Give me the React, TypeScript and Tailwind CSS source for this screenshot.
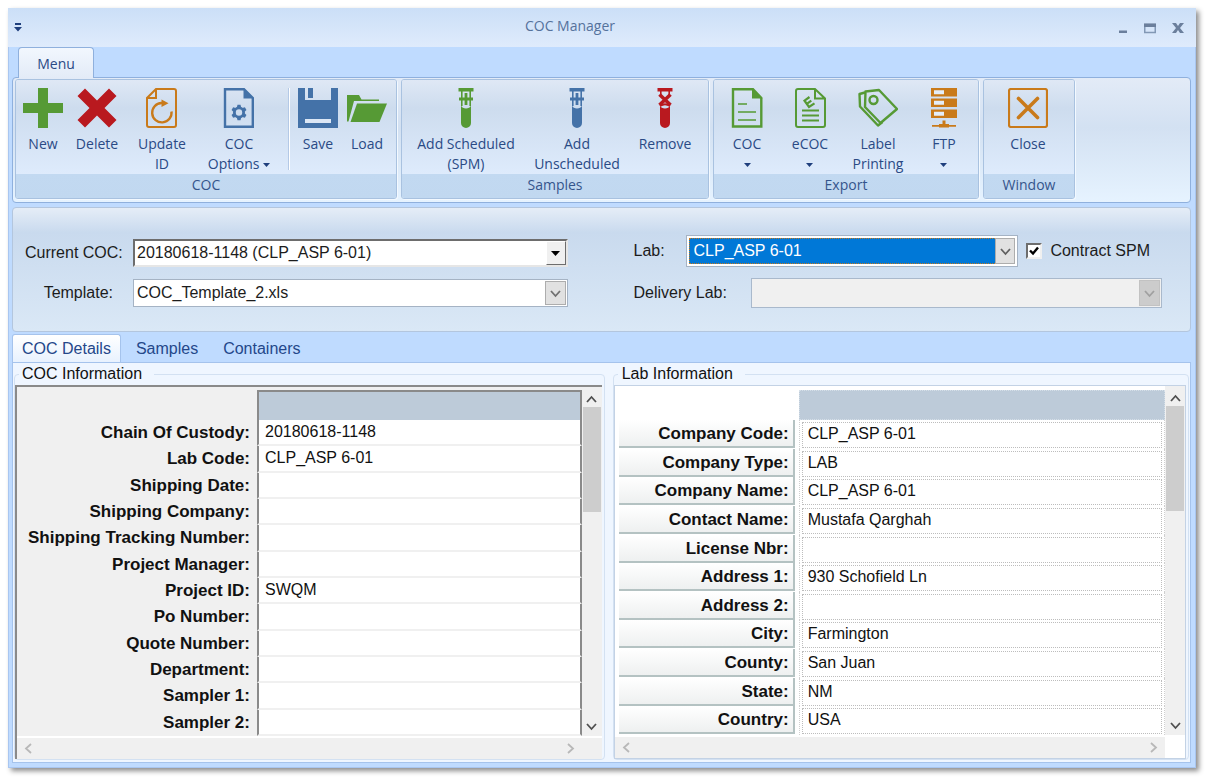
import { useState } from "react";
import type { ReactNode } from "react";

const GREEN = "#569a35";
const RED = "#b9191f";
const ORANGE = "#c97a1a";
const BLUE = "#4472a8";

const cocRows: [string, string][] = [
  ["Chain Of Custody:", "20180618-1148"],
  ["Lab Code:", "CLP_ASP 6-01"],
  ["Shipping Date:", ""],
  ["Shipping Company:", ""],
  ["Shipping Tracking Number:", ""],
  ["Project Manager:", ""],
  ["Project ID:", "SWQM"],
  ["Po Number:", ""],
  ["Quote Number:", ""],
  ["Department:", ""],
  ["Sampler 1:", ""],
  ["Sampler 2:", ""],
];

const labRows: [string, string][] = [
  ["Company Code:", "CLP_ASP 6-01"],
  ["Company Type:", "LAB"],
  ["Company Name:", "CLP_ASP 6-01"],
  ["Contact Name:", "Mustafa Qarghah"],
  ["License Nbr:", ""],
  ["Address 1:", "930 Schofield Ln"],
  ["Address 2:", ""],
  ["City:", "Farmington"],
  ["County:", "San Juan"],
  ["State:", "NM"],
  ["Country:", "USA"],
];

function Icon({ children }: { children: ReactNode }) {
  return (
    <svg className="w-10 h-10 shrink-0" viewBox="0 0 40 40" fill="none" aria-hidden="true">
      {children}
    </svg>
  );
}

function Caret() {
  return (
    <svg className="w-[7px] h-1 inline-block align-middle" viewBox="0 0 7 4" aria-hidden="true">
      <path d="M0 0h7L3.5 4z" fill="#1f3f7d" />
    </svg>
  );
}

function Chevron({ dir, color }: { dir: "up" | "down" | "left" | "right"; color: string }) {
  const paths = { up: "M1 8l4.5-5L10 8", down: "M1 3l4.5 5L10 3", left: "M8 1L3 5.5 8 10", right: "M3 1l5 4.5L3 10" };
  return (
    <svg width="11" height="11" viewBox="0 0 11 11" fill="none" aria-hidden="true">
      <path d={paths[dir]} stroke={color} strokeWidth={1.8} />
    </svg>
  );
}

function Tube({ color, remove }: { color: string; remove?: boolean }) {
  return (
    <Icon>
      <path d="M12.5 0h15v3.5h-15z" fill={color} />
      <path d="M15 17.5c1 2.2 2.6 3 5 3s4-.8 5-3V35a5 5 0 0 1-10 0z" fill={color} />
      {remove ? (
        <>
          <path d="M15.8 3v5M24.2 3v5" stroke={color} strokeWidth={1.6} />
          <path d="M14.5 6.5l11 10.5M25.5 6.5l-11 10.5" stroke={color} strokeWidth={3.6} />
          <path d="M15 18q5-3.5 10 0" stroke={color} strokeWidth={2} />
        </>
      ) : (
        <>
          <path d="M15.8 3v15M24.2 3v15" stroke={color} strokeWidth={1.6} />
          <path d="M13 11h14M20 5v12" stroke={color} strokeWidth={2.8} />
        </>
      )}
    </Icon>
  );
}

function RibbonGroup({ title, children }: { title: string; children: ReactNode }) {
  return (
    <section className="flex flex-col rounded-[3px] border border-[#a9c2e0] overflow-hidden shadow-[1px_1px_0_#f3f9ff]">
      <div className="flex items-stretch pt-2 pl-[2px] pr-1 flex-1 bg-linear-to-b from-[#dfe8f5] via-[#cddcee] via-30% to-[#deebfc]">{children}</div>
      <h2 className="h-6 text-center leading-[22px] bg-linear-to-b from-[#c2d9f1] to-[#c1d8f0] text-[#35558c]">{title}</h2>
    </section>
  );
}

function RibbonButton({ width, icon, lines, caret }: { width: string; icon: ReactNode; lines: string[]; caret?: boolean }) {
  return (
    <button type="button" className={`${width} flex flex-col items-center gap-[6px] min-h-[86px] leading-5 whitespace-nowrap hover:bg-white/30`}>
      {icon}
      <span className="block text-center">
        <span className="block">{lines[0]}</span>
        <span className="block h-5">
          {lines[1]} {caret && <Caret />}
        </span>
      </span>
    </button>
  );
}

function Ribbon() {
  return (
    <div className="flex gap-1 rounded-[4px] border border-[#8fb0dd] bg-linear-to-b from-[#e3ebf7] via-[#d3e1f2] via-40% to-[#e6f3ff] px-[2px] pt-px pb-[3px]">
      <RibbonGroup title="COC">
        <RibbonButton width="w-[50px]" lines={["New"]} icon={
          <Icon><path d="M15 0h10v15h15v10H25v15H15V25H0V15h15z" fill={GREEN} /></Icon>
        } />
        <RibbonButton width="w-[58px]" lines={["Delete"]} icon={
          <Icon><path d="M8 .5L20 12.5 32 .5 39.5 8l-12 12 12 12-7.5 7.5-12-12-12 12L.5 32l12-12L.5 8z" fill={RED} /></Icon>
        } />
        <RibbonButton width="w-[72px]" lines={["Update", "ID"]} icon={
          <Icon>
            <path d="M14 1h18q2 0 2 2v34q0 2-2 2H7q-2 0-2-2V10zV10H5" stroke={ORANGE} strokeWidth={2} />
            <path d="M29.5 23.5A9.7 9.7 0 1 1 19.5 15h3" stroke={ORANGE} strokeWidth={2.4} />
            <path d="M19.5 11.5l7 3.7-7 3.7z" fill={ORANGE} />
          </Icon>
        } />
        <RibbonButton width="w-[82px]" lines={["COC", "Options"]} caret icon={
          <Icon>
            <path d="M6 1.2h19l8.8 8.8v28.8H6z" stroke={BLUE} strokeWidth={2.4} />
            <path d="M24.5 0v10.5H35z" fill={BLUE} />
            <circle cx="20" cy="24.5" r="4.6" stroke={BLUE} strokeWidth={2.8} />
            {[0, 60, 120, 180, 240, 300].map((angle) => (
              <path key={angle} d="M17.8 19.5l.7-2.7h3l.7 2.7z" fill={BLUE} transform={`rotate(${angle} 20 24.5)`} />
            ))}
          </Icon>
        } />
        <div className="w-[2px] ml-2 mr-1 mb-1 border-l border-[#b4c9e6] bg-white" />
        <RibbonButton width="w-12" lines={["Save"]} icon={
          <Icon>
            <path d="M0 0h7v12h26V0h7v40H0zM10 0h5v10h-5z" fill={BLUE} />
            <path d="M7 31h26v4H7z" fill="#dce7f5" />
          </Icon>
        } />
        <RibbonButton width="w-[50px]" lines={["Load"]} icon={
          <Icon>
            <path d="M0 7h12l2.5 4.5H32V13H7L1.5 33.5H0z" fill={GREEN} />
            <path d="M10 15.5h30L32.5 34h-29z" fill={GREEN} />
          </Icon>
        } />
      </RibbonGroup>

      <RibbonGroup title="Samples">
        <RibbonButton width="w-[124px]" lines={["Add Scheduled", "(SPM)"]} icon={<Tube color={GREEN} />} />
        <RibbonButton width="w-[98px]" lines={["Add", "Unscheduled"]} icon={<Tube color={BLUE} />} />
        <RibbonButton width="w-[78px]" lines={["Remove"]} icon={<Tube color={RED} remove />} />
      </RibbonGroup>

      <RibbonGroup title="Export">
        <RibbonButton width="w-[62px]" lines={["COC"]} caret icon={
          <Icon>
            <path d="M6 1.2h20l8.3 8.8v28.5H6z" stroke={GREEN} strokeWidth={2.4} />
            <path d="M25 0v10.5h10.5z" fill={GREEN} />
            <path d="M11 16h9M11 24h18M11 32h18" stroke={GREEN} strokeWidth={1.5} />
          </Icon>
        } />
        <RibbonButton width="w-16" lines={["eCOC"]} caret icon={
          <Icon>
            <path d="M25 1H8Q6 1 6 3v34q0 2 2 2h25q2 0 2-2V10.5L25 1v9.5h10" stroke={GREEN} strokeWidth={2} />
            <path d="M12 22.5h17M12 27.5h17M12 32.5h17" stroke={GREEN} strokeWidth={2} />
            <path d="M19.5 9l-5 3.7 4.5 6.3 5.5-3.7M16.8 15.8l4.5-3.2" stroke={GREEN} strokeWidth={2.2} />
          </Icon>
        } />
        <RibbonButton width="w-[72px]" lines={["Label", "Printing"]} icon={
          <Icon>
            <path d="M7.500 3.500L21 2l18 19-16.500 14L7 19z" stroke={GREEN} strokeWidth={2.4} strokeLinejoin="round" />
            <path d="M7 4.5L1.500 6 2 18.500l18 19 4.500-3.500" stroke={GREEN} strokeWidth={2.4} strokeLinejoin="round" />
            <circle cx="15.5" cy="12" r="4" stroke={GREEN} strokeWidth={2.4} />
          </Icon>
        } />
        <RibbonButton width="w-[60px]" lines={["FTP"]} caret icon={
          <Icon>
            <path d="M7 0h26v8.5H7zM7 10.5h26V19H7zM7 21.5h26V30H7z" fill={ORANGE} />
            <path d="M10 2.2h10v4H10zM10 12.8h10v4H10zM10 23.8h10v4H10z" fill="#e4edf8" />
            <path d="M8 37.8h24" stroke={ORANGE} strokeWidth={1.8} />
            <path d="M18.5 32.5h3V36h3.5v3.5H15V36h3.5z" fill={ORANGE} />
          </Icon>
        } />
      </RibbonGroup>

      <RibbonGroup title="Window">
        <RibbonButton width="w-[84px]" lines={["Close"]} icon={
          <Icon>
            <rect x="1" y="1" width="38" height="38" rx="2" stroke={ORANGE} strokeWidth={2.2} />
            <path d="M10.5 10.5l19 19M29.5 10.5l-19 19" stroke={ORANGE} strokeWidth={3.6} strokeLinecap="round" />
          </Icon>
        } />
      </RibbonGroup>
    </div>
  );
}

function FormArea() {
  const [contract, setContract] = useState(true);
  return (
    <div className="flex h-[125px] pt-7 mt-1 rounded-[4px] border border-[#b3c6de] text-[#1c1c1c] bg-linear-to-b from-[#e5edf7] via-[#c9daee] via-20% to-[#dae8f6]">
      <div className="w-1/2 pl-3 pr-[34px] flex flex-col gap-[10px] pt-[2px]">
        <div className="flex items-center h-[30px]">
          <label htmlFor="current-coc" className="w-[108px] pr-4 text-right whitespace-nowrap">Current COC:</label>
          <div className="relative flex-1">
            <select id="current-coc" className="block w-full h-7 pl-[2px] appearance-none bg-white border-2 border-t-[#6d6d6d] border-l-[#6d6d6d] border-r-[#e6e6e6] border-b-[#e6e6e6]">
              <option>20180618-1148 (CLP_ASP 6-01)</option>
            </select>
            <span className="absolute right-[2px] top-[2px] w-5 h-6 flex items-center justify-center pointer-events-none bg-[#f0f0f0] border border-t-white border-l-white border-r-[#6d6d6d] border-b-[#6d6d6d]">
              <svg width="9" height="5" viewBox="0 0 9 5" aria-hidden="true"><path d="M0 0h9L4.5 5z" fill="#000" /></svg>
            </span>
          </div>
        </div>
        <div className="flex items-center h-[30px]">
          <label htmlFor="template" className="w-[108px] pr-5 text-right whitespace-nowrap">Template:</label>
          <div className="relative flex-1">
            <select id="template" className="block w-full h-7 pl-[3px] appearance-none bg-white border border-[#a5b3c4]">
              <option>COC_Template_2.xls</option>
            </select>
            <span className="absolute right-[2px] top-[2px] w-[21px] h-6 flex items-center justify-center pointer-events-none bg-[#e1e1e1] border border-[#adadad]">
              <Chevron dir="down" color="#707070" />
            </span>
          </div>
        </div>
      </div>

      <div className="w-1/2 pl-8 pr-7 flex flex-col gap-3">
        <div className="flex items-center h-[30px] pr-3">
          <label htmlFor="lab" className="w-[52px]">Lab:</label>
          <div className="relative flex-1 bg-white border border-[#a5b3c4] p-[2px]">
            <select id="lab" className="block w-full h-[26px] pl-1 appearance-none bg-[#0078d7] text-white border border-dotted border-[#c77a1e]">
              <option>CLP_ASP 6-01</option>
            </select>
            <span className="absolute right-[2px] top-[2px] w-5 h-[26px] flex items-center justify-center pointer-events-none bg-[#e1e1e1] border border-[#adadad]">
              <Chevron dir="down" color="#606060" />
            </span>
          </div>
          <span className="relative flex ml-2 mr-2">
            <input id="contract" type="checkbox" checked={contract} onChange={(e) => setContract(e.target.checked)} className="w-4 h-4 appearance-none bg-white border-2 border-t-[#6d6d6d] border-l-[#6d6d6d] border-r-[#f0f0f0] border-b-[#f0f0f0]" />
            {contract && (
              <svg className="absolute left-[3px] top-[3px] pointer-events-none" width="10" height="10" viewBox="0 0 10 10" fill="none" aria-hidden="true">
                <path d="M1 4.5l3 3 5-6" stroke="#000" strokeWidth={2.4} />
              </svg>
            )}
          </span>
          <label htmlFor="contract" className="whitespace-nowrap">Contract SPM</label>
        </div>
        <div className="flex items-center h-[30px]">
          <label htmlFor="delivery-lab" className="w-[117px]">Delivery Lab:</label>
          <div className="relative flex-1">
            <select id="delivery-lab" disabled className="block w-full h-[30px] appearance-none bg-[#f0f0f0] border border-[#a9b9cc]">
              <option></option>
            </select>
            <span className="absolute right-[2px] top-[2px] w-[21px] h-[26px] flex items-center justify-center pointer-events-none bg-[#cccccc] border border-[#c2c2c2]">
              <Chevron dir="down" color="#a0a0a0" />
            </span>
          </div>
        </div>
      </div>
    </div>
  );
}

function VScroll() {
  return (
    <div className="w-5 flex flex-col items-center bg-[#f0f0f0]">
      <span className="h-5 pt-1 flex items-center"><Chevron dir="up" color="#505050" /></span>
      <div className="w-[18px] h-[30%] bg-[#cdcdcd]" />
      <span className="mt-auto h-5 flex items-center"><Chevron dir="down" color="#505050" /></span>
    </div>
  );
}

function HScroll({ corner }: { corner: string }) {
  return (
    <div className="flex h-[21px] mt-[2px]">
      <div className="flex-1 flex items-center justify-between px-[6px] bg-[#f0f0f0]">
        <Chevron dir="left" color="#b8b8b8" />
        <Chevron dir="right" color="#b8b8b8" />
      </div>
      <div className={`w-5 ${corner}`} />
    </div>
  );
}

function CocInformation() {
  return (
    <fieldset className="flex-[41] min-w-0 flex flex-col rounded-[4px] border border-[#d3e1f2] pr-[2px]">
      <legend className="ml-1 pl-[3px] pr-3 leading-5">COC Information</legend>
      <div className="flex-1 min-h-0 mt-px flex flex-col bg-white border-t-2 border-l-2 border-t-[#8a8a8a] border-l-[#8a8a8a]">
        <div className="flex-1 min-h-0 flex bg-[#f0f0f0]">
          <div className="flex-1 min-w-0 pt-[3px]">
            <table className="w-full h-full border-separate border-spacing-0">
              <thead>
                <tr>
                  <th className="w-[240px] h-[30px] p-0" />
                  <th className="h-[30px] p-0 bg-[#bdcbd9] border-l-2 border-t-2 border-r-2 border-[#8a8a8a]" />
                </tr>
              </thead>
              <tbody>
                {cocRows.map(([label, value]) => (
                  <tr key={label}>
                    <th className="p-0 pr-[7px] text-right text-[17px] leading-6 font-bold whitespace-nowrap">{label}</th>
                    <td className="p-0 pl-[6px] leading-[22px] bg-white border-x-2 border-b-2 border-x-[#8a8a8a] border-b-[#f0f0f0]">{value}</td>
                  </tr>
                ))}
              </tbody>
            </table>
          </div>
          <VScroll />
        </div>
        <HScroll corner="bg-[#f0f0f0]" />
      </div>
    </fieldset>
  );
}

function LabInformation() {
  return (
    <fieldset className="flex-[40] min-w-0 flex flex-col rounded-[4px] border border-[#d3e1f2] pr-[2px]">
      <legend className="ml-1 pl-1 pr-3 leading-5">Lab Information</legend>
      <div className="flex-1 min-h-0 mt-px flex flex-col bg-white border border-[#c3d2e5]">
        <div className="flex-1 min-h-0 flex">
          <div className="flex-1 min-w-0 pt-1 pl-1">
            <table className="w-full h-full border-separate border-spacing-0">
              <thead>
                <tr>
                  <th className="w-[180px] h-[30px] p-0" />
                  <th className="h-[30px] p-0 bg-[#bdcbd9] border border-dotted border-[#d5dfe8]" />
                </tr>
              </thead>
              <tbody>
                {labRows.map(([label, value]) => (
                  <tr key={label}>
                    <th className="p-0 pr-1 text-right text-[17px] font-bold whitespace-nowrap align-top">
                      <div className="h-7 pr-1 leading-7 border-b-2 border-r-2 border-[#b4c2c2] bg-linear-to-b from-white to-[#eef0f0]">{label}</div>
                    </th>
                    <td className="p-0 px-[2px] align-top border-x border-dotted border-[#cfcfcf]">
                      <div className="h-[26px] mt-[2px] pl-[5px] leading-[22px] border border-dotted border-[#bdbdbd]">{value}</div>
                    </td>
                  </tr>
                ))}
              </tbody>
            </table>
          </div>
          <VScroll />
        </div>
        <HScroll corner="bg-white" />
      </div>
    </fieldset>
  );
}

const tabs = ["COC Details", "Samples", "Containers"];

export default function App() {
  const [tab, setTab] = useState(tabs[0]);
  return (
    <div className="h-screen bg-white pt-2 pl-2 pr-4 pb-4 font-['Liberation_Sans',Arial,sans-serif] text-[16px] text-[#111]">
      <div className="h-full flex flex-col bg-[#bfdbff] shadow-[3px_3px_5px_rgba(0,0,0,0.45)]">
        <header className="h-[39px] shrink-0 flex items-center px-[6px] bg-linear-to-b from-[#cbdff7] to-[#dfebfc] font-['Open_Sans',sans-serif] text-[14px] text-[#55729c]">
          <button type="button" aria-label="Customize toolbar" className="w-6 flex">
            <svg width="8" height="9" viewBox="0 0 8 9" aria-hidden="true"><path d="M1 0h6v2H1zM0 4h8L4 8.5z" fill="#1f3f7d" /></svg>
          </button>
          <h1 className="flex-1 text-center pb-1 pr-4">COC Manager</h1>
          <div className="flex items-center gap-4 pr-[6px]">
            <button type="button" aria-label="Minimize">
              <svg width="10" height="12" viewBox="0 0 10 12" aria-hidden="true"><path d="M1 8.5h8V11H1z" fill="#6b7f9c" /></svg>
            </button>
            <button type="button" aria-label="Maximize">
              <svg width="12" height="12" viewBox="0 0 12 12" fill="none" aria-hidden="true"><path d="M.75 2.5h10.5v8H.75z" stroke="#8298b5" strokeWidth={1.5} /><path d="M0 1.5h12V5H0z" fill="#6b7f9c" /></svg>
            </button>
            <button type="button" aria-label="Close window">
              <svg width="12" height="12" viewBox="0 0 12 12" aria-hidden="true"><path d="M0 1h4l2 3 2-3h4L8 6l4 5H8L6 8l-2 3H0l4-5z" fill="#6b7f9c" /></svg>
            </button>
          </div>
        </header>

        <div className="flex-1 min-h-0 flex flex-col pl-[3px] pr-1 pb-1 border-x border-b border-[#a9c6f0]">
          <nav className="h-[30px] shrink-0 flex pl-[6px] font-['Open_Sans',sans-serif] text-[14px] text-[#2a4a85]">
            <button type="button" className="w-[76px] h-[31px] relative rounded-t-[4px] border border-b-0 border-[#8fb0dd] bg-linear-to-b from-[#f2f7fe] to-[#e3ebf7]">Menu</button>
          </nav>
          <div className="shrink-0 font-['Open_Sans',sans-serif] text-[14px] text-[#2a4a85]">
            <Ribbon />
          </div>
          <div className="shrink-0">
            <FormArea />
          </div>

          <div role="tablist" className="shrink-0 flex h-7 mt-[2px] text-[#24478a]">
            {tabs.map((name) => (
              <button
                key={name}
                type="button"
                role="tab"
                aria-selected={tab === name}
                onClick={() => setTab(name)}
                className={`px-[9px] mr-[5px] rounded-t-[3px] border border-b-0 ${tab === name ? "bg-linear-to-b from-white to-[#e8f2fe] border-[#a5c3ec]" : "border-transparent"}`}
              >
                {name}
              </button>
            ))}
          </div>

          <main className="flex-1 min-h-0 flex gap-2 px-px pt-px pb-[2px] border border-[#a5c3ec] bg-[#eff6ff]">
            <CocInformation />
            <LabInformation />
          </main>
        </div>
      </div>
    </div>
  );
}
